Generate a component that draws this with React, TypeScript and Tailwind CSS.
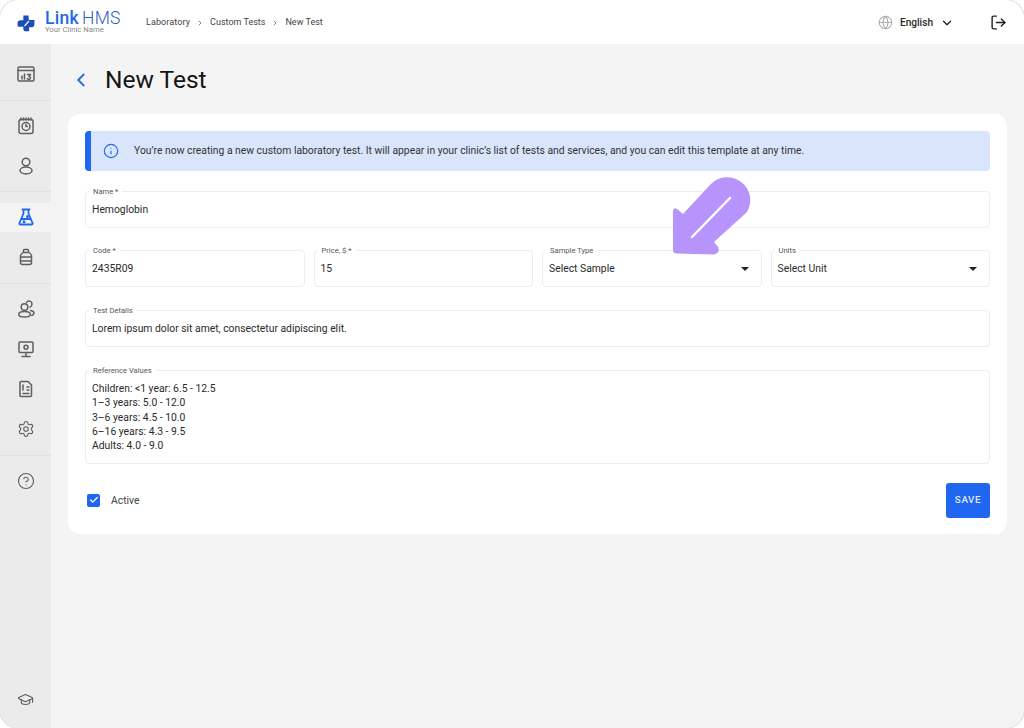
import React from "react";
import { ChevronLeft, ChevronRight, ChevronDown, LogOut, Globe, Info, Check, Settings, CircleHelp, GraduationCap } from "lucide-react";

const Ic = ({ children, w = 1.5 }: { children: React.ReactNode; w?: number }) => (
  <svg width="20" height="20" viewBox="0 0 20 20" fill="none" stroke="currentColor" strokeWidth={w} strokeLinecap="round" strokeLinejoin="round">
    {children}
  </svg>
);

const Item = ({ children, active }: { children: React.ReactNode; active?: boolean }) => (
  <div className="flex h-10 items-center">
    <div className={"flex h-[29px] w-full items-center justify-center " + (active ? "bg-[#f4f4f4] text-[#2368ec]" : "text-[#5f5f5f]")}>{children}</div>
  </div>
);

const Divider = () => <div className="h-px shrink-0 bg-[#e0e0e0]" />;

const Field = ({ label, value, select, className }: { label: string; value: string; select?: boolean; className?: string }) => (
  <div className={"relative flex h-[37px] items-center justify-between rounded-[4px] border border-[#ededed] pl-[6px] pr-[12px] " + (className ?? "")}>
    <span className="absolute -top-[5px] left-[3px] bg-white px-1 text-[7.6px] leading-[10px] text-[#555]">{label}</span>
    <span className="text-[10.35px] text-[#2a2a2a]">{value}</span>
    {select && <span className="h-0 w-0 border-x-[4px] border-t-[4px] border-x-transparent border-t-[#222]" />}
  </div>
);

export default function App() {
  return (
    <div className="h-[728px] w-[1024px] overflow-hidden bg-white font-['Roboto',sans-serif]">
      <div className="relative -m-px flex h-[730px] w-[1026px] flex-col overflow-hidden rounded-[20px] border border-dotted border-[#c4c4c4] bg-[#f4f4f4]">
        <header className="flex h-11 shrink-0 items-center bg-white pl-[17px] pr-[17px] pt-[1px]">
          <svg width="19" height="19" viewBox="0 0 18 18" className="mt-[1px]">
            <path d="M6 1.5h5v3.2a1 1 0 0 0 1 1h4.5v4.6a2.2 2.2 0 0 1-2.2 2.2H11.5v3.9h-3a2.5 2.5 0 0 1-2.5-2.5V12H1.5A1 1 0 0 1 .5 11V9a3 3 0 0 1 3-3H6z" fill="#1a4fb8" />
            <path d="M7.5 11 11 7" stroke="#fff" strokeWidth="1.3" strokeLinecap="round" />
          </svg>
          <div className="ml-[9px] flex w-[83px] flex-col">
            <div className="flex h-[14px] items-center gap-[3px] text-[17.5px] leading-[14px] text-[#2368ec]">
              <span className="font-medium tracking-[0.3px]">Link</span>
              <span className="font-light tracking-[0.3px] text-[#2a5cc0]">HMS</span>
            </div>
            <div className="mt-[1px] text-[7.7px] leading-[8px] text-[#8a8a8a]">Your Clinic Name</div>
          </div>
          <nav className="ml-[18px] flex items-center text-[9px] text-[#444]">
            <span className="tracking-[0.1px]">Laboratory</span>
            <ChevronRight size={8} className="mx-[6px]" />
            <span>Custom Tests</span>
            <ChevronRight size={8} className="mx-[6px]" />
            <span>New Test</span>
          </nav>
          <div className="ml-auto flex items-center">
            <Globe size={15} strokeWidth={1.8} className="text-[#b0b0b0]" />
            <span className="ml-[7px] text-[10.1px] font-medium text-[#2a2a2a]">English</span>
            <ChevronDown size={14} strokeWidth={2.2} className="ml-[7px] text-[#222]" />
            <LogOut size={17} strokeWidth={2} className="ml-[36px] text-[#222]" />
          </div>
        </header>
        <div className="flex min-h-0 flex-1">
          <aside className="flex w-[51px] shrink-0 flex-col bg-[#ebebeb]">
            <div className="pt-[10px] pb-[6px]">
              <Item>
                <Ic>
                  <rect x="2" y="3" width="16" height="14" rx="1.5" />
                  <path d="M2 6.5h16M6 15v-3M8.5 15v-5M11.5 10.5h3l-1.5 2a1.5 1.5 0 1 1-1.5 2" />
                </Ic>
              </Item>
            </div>
            <Divider />
            <div className="pt-[5px] pb-[5px]">
              <Item>
                <Ic>
                  <rect x="3" y="3.5" width="14" height="14" rx="2" />
                  <path d="M5 2v2M7.5 2v2M10 2v2M12.5 2v2M15 2v2" />
                  <circle cx="10" cy="10.5" r="4" />
                  <path d="M10 8.5v2h1.5" />
                </Ic>
              </Item>
              <Item>
                <Ic>
                  <circle cx="10" cy="6" r="3.8" />
                  <ellipse cx="10" cy="14.5" rx="6" ry="3.5" />
                </Ic>
              </Item>
            </div>
            <Divider />
            <div className="pt-[5px] pb-[6px]">
              <Item active>
                <Ic w={1.8}>
                  <path d="M6.5 2.5h7M7.5 2.5v4L3.500 16a1 1 0 0 0 1 1.500h11a1 1 0 0 0 1-1.500L12.500 6.500v-4" />
                  <path d="M5.500 12h9" />
                  <circle cx="8" cy="14.800" r="0.600" fill="currentColor" />
                  <circle cx="11.500" cy="9.500" r="0.600" fill="currentColor" />
                </Ic>
              </Item>
              <Item>
                <Ic>
                  <rect x="7.500" y="2.500" width="5" height="3" rx="0.800" />
                  <path d="M7 5.500c-1.500 1-2.500 2-2.500 3.500v6.500A2 2 0 0 0 6.500 17.500h7a2 2 0 0 0 2-2V9c0-1.500-1-2.500-2.500-3.500M4.500 10h11M4.500 14h11" />
                </Ic>
              </Item>
            </div>
            <Divider />
            <div className="pt-[5px] pb-[6px]">
              <Item>
                <Ic>
                  <circle cx="8.500" cy="8" r="3.300" />
                  <ellipse cx="8.500" cy="15.200" rx="5.800" ry="2.800" />
                  <path d="M10.500 3.300a3 3 0 0 1 5.500 1.700c0 1.500-.7 2.500-2 3.200M14.500 11.500c2 .4 3.500 1.500 3.500 2.800 0 1-.8 1.800-2.200 2.200" />
                </Ic>
              </Item>
              <Item>
                <Ic>
                  <rect x="3" y="3" width="14" height="10.500" rx="1" />
                  <path d="M10 13.500V17M6 17.500h8" />
                  <circle cx="10" cy="8.200" r="2" />
                </Ic>
              </Item>
              <Item>
                <Ic>
                  <path d="M5 2.500h7l3.500 3.500v10.500a1 1 0 0 1-1 1H5a1 1 0 0 1-1-1v-13a1 1 0 0 1 1-1z" />
                  <path d="M7 6v5M11 8h2M11 11h2M7 14.500h6" />
                </Ic>
              </Item>
              <Item>
                <Settings size={18} strokeWidth={1.5} />
              </Item>
            </div>
            <Divider />
            <div className="flex-1 pt-[5px]">
              <Item>
                <CircleHelp size={18} strokeWidth={1.5} />
              </Item>
            </div>
            <div className="pb-[9px]">
              <Item>
                <GraduationCap size={17} strokeWidth={1.6} />
              </Item>
            </div>
          </aside>
          <main className="min-w-0 flex-1 pl-[17px] pr-[17px]">
            <div className="flex h-[70px] items-center pl-[2px] pt-[2px]">
              <ChevronLeft size={22} strokeWidth={2} className="text-[#2368ec]" />
              <h1 className="ml-[13px] text-[24.5px] font-normal leading-none text-[#151515]">New Test</h1>
            </div>
            <section className="relative flex h-[420px] flex-col rounded-[12px] bg-white px-[17px] pt-[17px]">
              <div className="flex h-10 items-center rounded-[4px] border-l-[6px] border-[#1f66f0] bg-[#d9e5fb] pl-[12px]">
                <Info size={16} strokeWidth={1.7} className="text-[#2368ec]" />
                <p className="ml-[15px] text-[10.35px] text-[#333]">
                  You’re now creating a new custom laboratory test. It will appear in your clinic’s list of tests and services, and you can edit this template at any time.
                </p>
              </div>
              <Field className="mt-[20px]" label="Name *" value="Hemoglobin" />
              <div className="mt-[22px] flex gap-[9px]">
                <Field className="flex-1 pt-[1px]" label="Code *" value="2435R09" />
                <Field className="flex-1 pt-[1px]" label="Price, $ *" value="15" />
                <Field className="flex-1 pt-[1px]" label="Sample Type" value="Select Sample" select />
                <Field className="flex-1 pt-[1px]" label="Units" value="Select Unit" select />
              </div>
              <Field className="mt-[23px]" label="Test Details" value="Lorem ipsum dolor sit amet, consectetur adipiscing elit." />
              <div className="relative mt-[23px] h-[94px] rounded-[4px] border border-[#ededed] pl-[6px] pt-[9px]">
                <span className="absolute -top-[5px] left-[3px] bg-white px-1 text-[7.6px] leading-[10px] text-[#555]">Reference Values</span>
                <div className="pt-[2px] text-[10.35px] leading-[14.3px] text-[#2a2a2a]">
                  <div>Children: &lt;1 year: 6.5 - 12.5</div>
                  <div>1–3 years: 5.0 - 12.0</div>
                  <div>3–6 years: 4.5 - 10.0</div>
                  <div>6–16 years: 4.3 - 9.5</div>
                  <div>Adults: 4.0 - 9.0</div>
                </div>
              </div>
              <div className="mt-[19px] flex items-center justify-between pl-[2px]">
                <div className="flex items-center">
                  <span className="flex h-[13px] w-[13px] items-center justify-center rounded-[2px] bg-[#1f66f0]">
                    <Check size={10} strokeWidth={3} className="text-white" />
                  </span>
                  <span className="ml-[11px] text-[10.35px] text-[#444]">Active</span>
                </div>
                <button className="h-[35px] w-[44px] rounded-[3px] bg-[#1f66f0] text-[9.8px] font-medium tracking-[0.6px] text-[#dfe9fd]">SAVE</button>
              </div>
            </section>
          </main>
        </div>
        <svg className="absolute left-[668px] top-[176px]" width="84" height="84" viewBox="0 0 84 84">
          <path d="M5 35Q5.5 31 9 33L15 38L42 9A23 23 0 0 1 79 36L46 66L50 71Q52.5 77 46 78.500L8 77.500Q5 77 5 74Z" fill="#b794fb" />
          <path d="M24 61L62 22" stroke="#fff" strokeWidth="2.5" strokeLinecap="round" />
        </svg>
      </div>
    </div>
  );
}
